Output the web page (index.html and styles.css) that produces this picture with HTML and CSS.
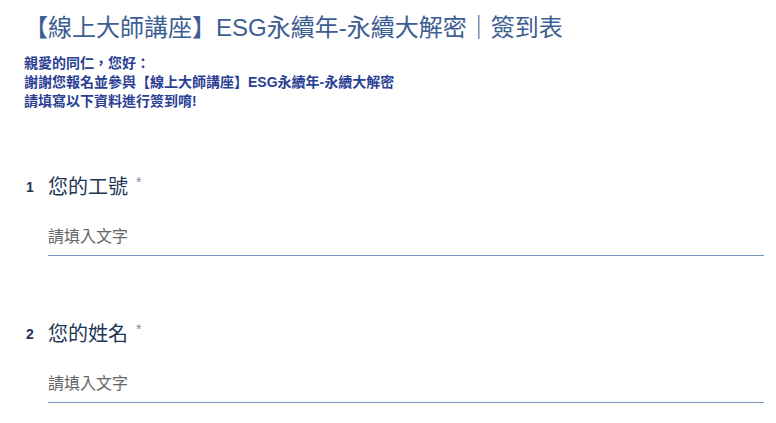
FILE: index.html
```html
<!DOCTYPE html>
<html lang="zh-Hant">
<head>
<meta charset="utf-8">
<title>簽到表</title>
<link rel="stylesheet" href="styles.css">
</head>
<body>
<div class="page">
  <h1 class="title">【線上大師講座】ESG永續年-永續大解密｜簽到表</h1>
  <div class="desc">
    <p>親愛的同仁，您好：</p>
    <p>謝謝您報名並參與【線上大師講座】ESG永續年-永續大解密</p>
    <p>請填寫以下資料進行簽到唷!</p>
  </div>
  <div class="questions">
    <div class="question">
      <div class="q-head">
        <span class="q-num">1</span>
        <span class="q-label">您的工號</span>
        <span class="q-req">*</span>
      </div>
      <div class="q-input"><span class="placeholder">請填入文字</span></div>
    </div>
    <div class="question">
      <div class="q-head">
        <span class="q-num">2</span>
        <span class="q-label">您的姓名</span>
        <span class="q-req">*</span>
      </div>
      <div class="q-input"><span class="placeholder">請填入文字</span></div>
    </div>
  </div>
</div>
</body>
</html>
```
FILE: styles.css
```css
html, body {
  margin: 0;
  padding: 0;
  background: #ffffff;
}
body {
  font-family: "Liberation Sans", "Noto Sans CJK TC", sans-serif;
}
.page {
  padding: 10px 12px 0 24px;
}
.title {
  margin: 0;
  font-size: 24px;
  font-weight: normal;
  line-height: 36px;
  color: #3d5e92;
}
.desc {
  margin-top: 8px;
  color: #2b3f94;
  font-size: 14px;
  font-weight: bold;
}
.desc p {
  margin: 0;
  line-height: 19px;
}
.questions {
  margin-top: 62px;
  display: flex;
  flex-direction: column;
  gap: 64px;
}
.q-head {
  display: flex;
  align-items: flex-start;
  height: 28px;
}
.q-num {
  width: 24px;
  padding-left: 2px;
  box-sizing: border-box;
  font-size: 14px;
  font-weight: bold;
  color: #1e3556;
  line-height: 28px;
}
.q-label {
  font-size: 20px;
  color: #1e3556;
  line-height: 28px;
}
.q-req {
  margin-left: 8px;
  font-size: 14px;
  color: #7a8aa8;
  line-height: 18px;
}
.q-input {
  margin-left: 24px;
  margin-top: 17px;
  height: 38px;
  padding-bottom: 4px;
  box-sizing: border-box;
  border-bottom: 1px solid #7a96c0;
  display: flex;
  align-items: center;
}
.placeholder {
  font-size: 16px;
  color: #666666;
}
```
